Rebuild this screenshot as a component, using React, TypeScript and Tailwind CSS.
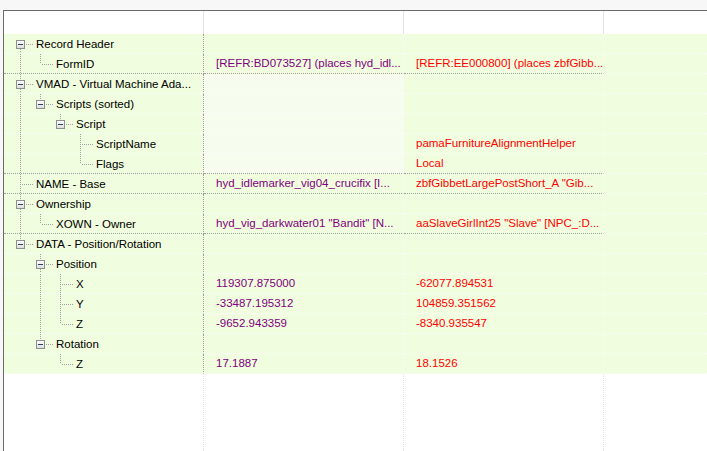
import React from "react";

type Row = {
  l: number;
  t: string;
  exp?: boolean;
  a?: string;
  b?: string;
  light?: boolean;
};

const rows: Row[] = [
  { l: 0, t: "Record Header", exp: true },
  { l: 1, t: "FormID", a: "[REFR:BD073527] (places hyd_idl...", b: "[REFR:EE000800] (places zbfGibb..." },
  { l: 0, t: "VMAD - Virtual Machine Ada...", exp: true, light: true },
  { l: 1, t: "Scripts (sorted)", exp: true, light: true },
  { l: 2, t: "Script", exp: true, light: true },
  { l: 3, t: "ScriptName", b: "pamaFurnitureAlignmentHelper", light: true },
  { l: 3, t: "Flags", b: "Local", light: true },
  { l: 0, t: "NAME - Base", a: "hyd_idlemarker_vig04_crucifix [I...", b: 'zbfGibbetLargePostShort_A "Gib...' },
  { l: 0, t: "Ownership", exp: true },
  { l: 1, t: "XOWN - Owner", a: 'hyd_vig_darkwater01 "Bandit" [N...', b: 'aaSlaveGirlInt25 "Slave" [NPC_:D...' },
  { l: 0, t: "DATA - Position/Rotation", exp: true },
  { l: 1, t: "Position", exp: true },
  { l: 2, t: "X", a: "119307.875000", b: "-62077.894531" },
  { l: 2, t: "Y", a: "-33487.195312", b: "104859.351562" },
  { l: 2, t: "Z", a: "-9652.943359", b: "-8340.935547" },
  { l: 1, t: "Rotation", exp: true },
  { l: 2, t: "Z", a: "17.1887", b: "18.1526" },
];

function hasNextSibling(i: number): boolean {
  const l = rows[i].l;
  for (let j = i + 1; j < rows.length; j++) {
    if (rows[j].l < l) return false;
    if (rows[j].l === l) return true;
  }
  return false;
}

function ancestorIndex(i: number, depth: number): number {
  for (let j = i - 1; j >= 0; j--) {
    if (rows[j].l === depth) return j;
  }
  return -1;
}

const LINE = "#a0a0a0";

function TreeLines({ i }: { i: number }) {
  const r = rows[i];
  const w = 32 + 20 * r.l;
  const cx = 16 + 20 * r.l;
  const els: React.ReactNode[] = [];
  for (let d = 0; d < r.l; d++) {
    const a = ancestorIndex(i, d);
    if (a >= 0 && hasNextSibling(a)) {
      const x = 16 + 20 * d + 0.5;
      els.push(<line key={"a" + d} x1={x} y1={0} x2={x} y2={20} />);
    }
  }
  const x = cx + 0.5;
  const next = hasNextSibling(i);
  if (r.exp) {
    if (i !== 0) els.push(<line key="up" x1={x} y1={0} x2={x} y2={6} />);
    if (next) els.push(<line key="dn" x1={x} y1={15} x2={x} y2={20} />);
    els.push(<line key="h" x1={cx + 6} y1={10.5} x2={cx + 13} y2={10.5} />);
  } else {
    if (i !== 0) els.push(<line key="up" x1={x} y1={0} x2={x} y2={10} />);
    if (next) els.push(<line key="dn" x1={x} y1={10} x2={x} y2={20} />);
    els.push(<line key="h" x1={cx + 2} y1={10.5} x2={cx + 13} y2={10.5} />);
  }
  return (
    <svg width={w} height={20} className="shrink-0" shapeRendering="crispEdges">
      <defs>
        <linearGradient id="boxg" x1="0" y1="0" x2="0" y2="1">
          <stop offset="0" stopColor="#ffffff" />
          <stop offset="1" stopColor="#dcdcdc" />
        </linearGradient>
      </defs>
      <g stroke={LINE} strokeWidth={1} strokeDasharray="1 1">
        {els}
      </g>
      {r.exp && (
        <g>
          <rect x={cx - 3.5} y={6.5} width={8} height={8} fill="url(#boxg)" stroke="#8e8f8f" />
          <line x1={cx - 2} y1={10.5} x2={cx + 3} y2={10.5} stroke="#2b3f66" strokeWidth={1} />
        </g>
      )}
    </svg>
  );
}

export default function App() {
  return (
    <div
      className="w-[707px] h-[451px] bg-[#f7f7f7] pt-[10px] pl-[3px] flex flex-col overflow-hidden text-[11.5px] text-black"
      style={{ fontFamily: '"Liberation Sans", Arial, sans-serif' }}
    >
      <div className="flex-1 flex flex-col border-t border-l border-[#6b6b6b] bg-white">
        {/* header */}
        <div className="flex h-[23px] shrink-0 bg-white">
          <div className="w-[200px] border-r border-[#e3e3e3]" />
          <div className="w-[200px] border-r border-[#e3e3e3]" />
          <div className="w-[200px] border-r border-[#e3e3e3]" />
          <div className="flex-1" />
        </div>
        {/* rows */}
        {rows.map((r, i) => {
          const dark = rows[i + 1]?.l === 0;
          const bLine = dark ? "border-b-[#a0a0a0]" : "border-b-[#fbfbfb]";
          return (
            <div key={i} className="flex h-5 shrink-0 bg-[#f1fddf]">
              <div
                className={`w-[200px] h-5 flex items-center border-b border-r border-dotted border-r-[#a0a0a0] ${bLine} whitespace-nowrap overflow-hidden`}
              >
                <TreeLines i={i} />
                <span className="leading-5">{r.t}</span>
              </div>
              <div
                className={`w-[200px] h-5 flex items-center pl-[12px] border-b border-r border-dotted border-r-[#fbfbfb] ${bLine} whitespace-nowrap overflow-hidden text-[#800080] ${
                  r.light ? "bg-[#f6fcee]" : ""
                }`}
              >
                {r.a}
              </div>
              <div
                className={`w-[200px] h-5 flex items-center pl-[12px] border-b border-r border-dotted border-r-[#fbfbfb] ${bLine} whitespace-nowrap overflow-hidden text-[#ff0000]`}
              >
                {r.b}
              </div>
              <div className="flex-1 h-5 border-b border-dotted border-b-[#fbfbfb]" />
            </div>
          );
        })}
        {/* empty area */}
        <div className="flex flex-1 bg-white">
          <div className="w-[200px] border-r border-dotted border-[#e0e0e0]" />
          <div className="w-[200px] border-r border-dotted border-[#e0e0e0]" />
          <div className="w-[200px] border-r border-dotted border-[#e0e0e0]" />
          <div className="flex-1" />
        </div>
      </div>
    </div>
  );
}
